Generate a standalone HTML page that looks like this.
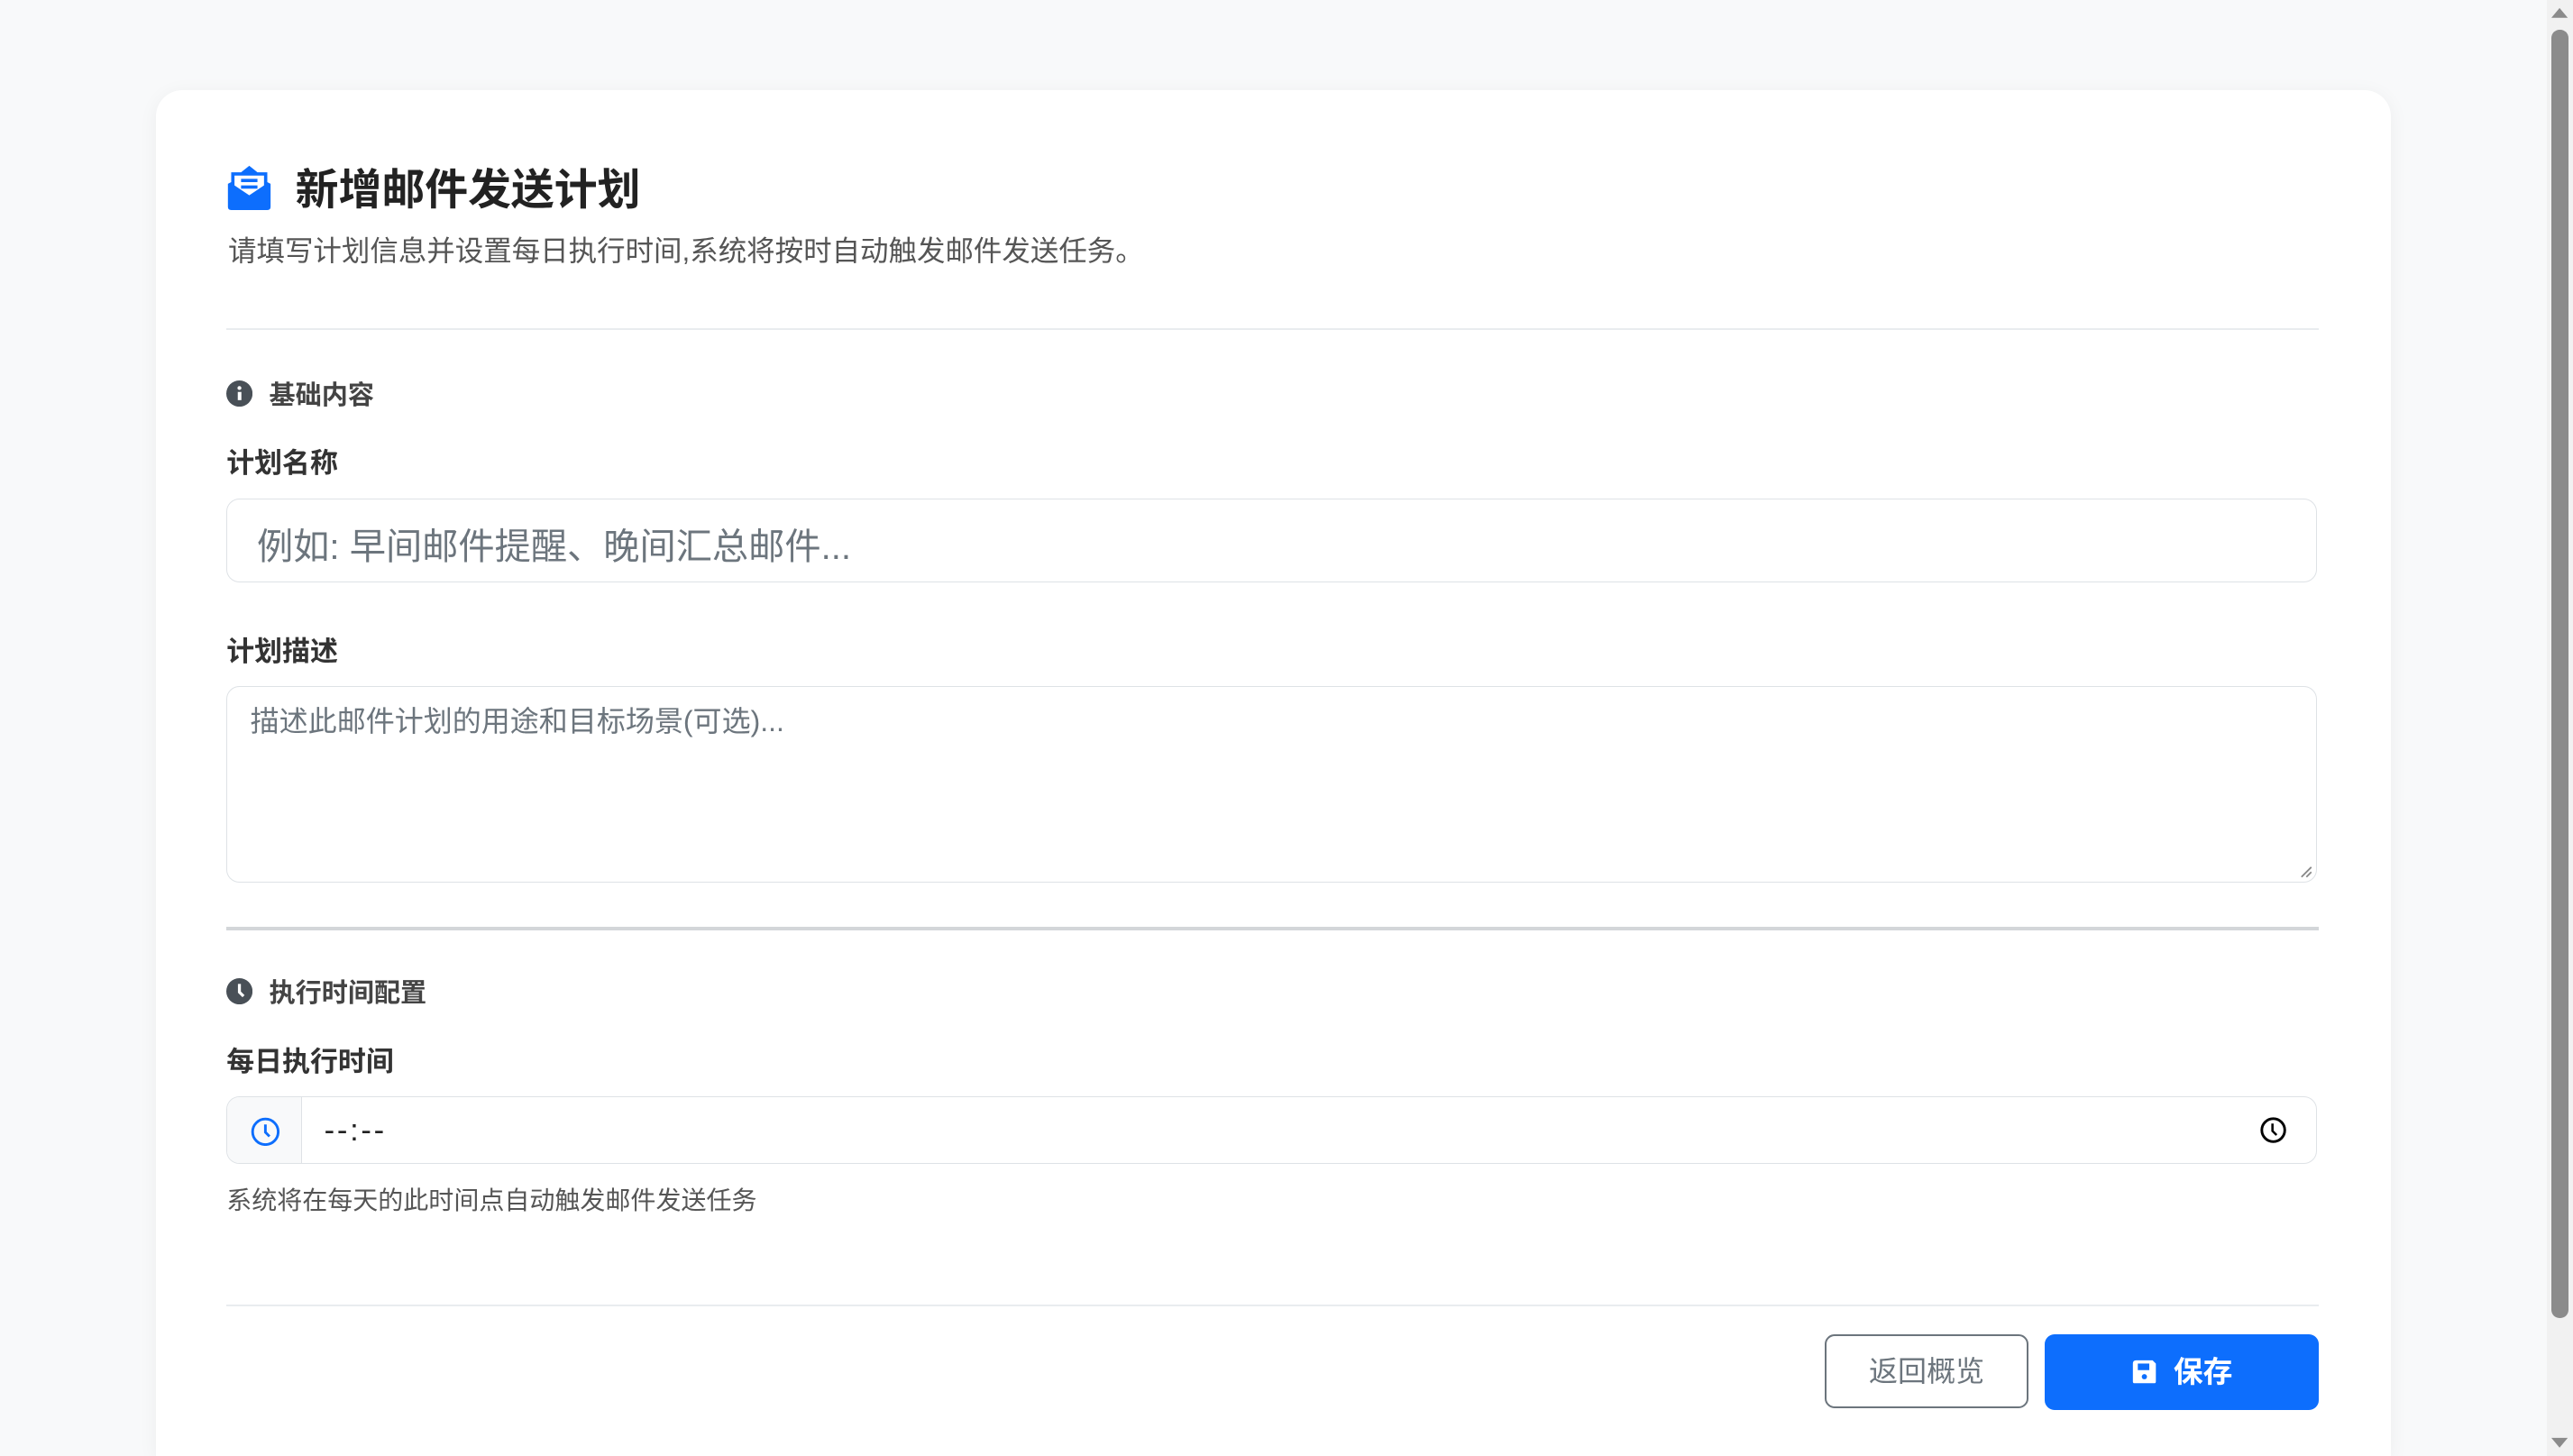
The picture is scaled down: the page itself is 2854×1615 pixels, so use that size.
<!DOCTYPE html>
<html><head><meta charset="utf-8"><style>
html{zoom:1.8202;overflow:hidden}
body{margin:0;width:1568px;height:887px;overflow:hidden;background:#f8f9fa;font-family:"Liberation Sans","Noto Sans CJK SC",sans-serif;position:relative}
.card{position:absolute;left:95px;top:55px;width:1362px;height:832px;background:#fff;border-radius:16px 16px 0 0;box-shadow:0 2px 12px rgba(0,0,0,.05)}
.a{position:absolute;white-space:nowrap}
.hr{position:absolute;left:138px;width:1275px;height:1px;background:#e9ecef}
.lbl{font-size:17px;font-weight:bold;color:#333}
.sec{font-size:16px;font-weight:bold;color:#444}
.box{position:absolute;left:138px;width:1273px;border:1px solid #dee2e6;border-radius:8px;background:#fff}
</style></head><body>
<div class="card"></div>
<svg class="a" style="left:138px;top:100px" width="28" height="28" viewBox="0 0 28 28"><path d="M14 1 L19 5 L25 5 L25 11 L27 12 L27 26 Q27 28 25 28 L3 28 Q1 28 1 26 L1 12 L3 11 L3 5 L9 5Z" fill="#0d6efd"/><path d="M5 7 H23 V13 L14 19 L5 13Z" fill="#fff"/><rect x="9" y="9" width="10" height="2" fill="#0d6efd"/><rect x="9" y="13" width="10" height="2" fill="#0d6efd"/></svg>
<div class="a" style="left:180px;top:94px;font-size:26.3px;font-weight:bold;color:#222">新增邮件发送计划</div>
<div class="a" style="left:139px;top:139px;font-size:17.3px;color:#555">请填写计划信息并设置每日执行时间,系统将按时自动触发邮件发送任务。</div>
<div class="hr" style="top:200px"></div>
<svg class="a" style="left:138px;top:232px" width="16" height="16"><circle cx="8" cy="8" r="8" fill="#495057"/><rect x="7" y="7" width="2.2" height="5" fill="#fff"/><circle cx="8" cy="4.6" r="1.2" fill="#fff"/></svg>
<div class="a sec" style="left:164px;top:228px">基础内容</div>
<div class="a lbl" style="left:138px;top:268px">计划名称</div>
<div class="box" style="top:304px;height:50px"><div class="a" style="left:18px;top:10px;font-size:22.1px;color:#6c757d">例如: 早间邮件提醒、晚间汇总邮件...</div></div>
<div class="a lbl" style="left:138px;top:383px">计划描述</div>
<div class="box" style="top:418px;height:119px"><div class="a" style="left:14px;top:7px;font-size:17.6px;color:#6c757d">描述此邮件计划的用途和目标场景(可选)...</div>
<svg class="a" style="right:2px;bottom:2px" width="8" height="8"><path d="M7 1L1 7M7 4L4 7" stroke="#888"/></svg></div>
<div class="hr" style="top:565px;height:2px;background:#d3d6d9"></div>
<svg class="a" style="left:138px;top:596px" width="16" height="16"><circle cx="8" cy="8" r="8" fill="#495057"/><path d="M8 3.5V8.5L10.5 11" stroke="#fff" stroke-width="1.8" fill="none"/></svg>
<div class="a sec" style="left:164px;top:592px">执行时间配置</div>
<div class="a lbl" style="left:138px;top:633px">每日执行时间</div>
<div class="box" style="top:668px;height:40px;overflow:hidden"><div class="a" style="left:0;top:0;width:45px;height:40px;background:#f8f9fa;border-right:1px solid #dee2e6"></div>
<svg class="a" style="left:14px;top:12px" width="18" height="18"><circle cx="9" cy="9" r="7.8" stroke="#0d6efd" stroke-width="1.6" fill="none"/><path d="M9 4.5V9.3L11.5 11.8" stroke="#0d6efd" stroke-width="1.6" fill="none"/></svg>
<div class="a" style="left:59px;top:10px;font-size:19px;letter-spacing:1.5px;color:#222">--:--</div>
<svg class="a" style="left:1239px;top:12px" width="16" height="16"><circle cx="8" cy="8" r="7" stroke="#000" stroke-width="1.6" fill="none"/><path d="M7.5 4V8.5L10 11" stroke="#000" stroke-width="1.4" fill="none"/></svg></div>
<div class="a" style="left:138px;top:719px;font-size:15.4px;color:#555">系统将在每天的此时间点自动触发邮件发送任务</div>
<div class="hr" style="top:795px"></div>
<div class="a" style="left:1112px;top:813px;width:122px;height:43px;border:1.5px solid #6c757d;border-radius:6px;font-size:17.6px;color:#6c757d;text-align:center;line-height:43px">返回概览</div>
<div class="a" style="left:1246px;top:813px;width:167px;height:46px;background:#0d6efd;border-radius:6px;color:#fff;font-size:18px;font-weight:bold;text-align:center;line-height:46px"><svg style="vertical-align:-2px;margin-right:10px" width="16" height="16"><path d="M1 3Q1 1 3 1H13L15 3V14Q15 15 14 15H2Q1 15 1 14Z" fill="#fff"/><rect x="4" y="3" width="7" height="4" fill="#0d6efd"/><circle cx="8" cy="11" r="1.6" fill="#0d6efd"/></svg>保存</div>
<div class="a" style="left:1552px;top:0;width:16px;height:887px;background:#f1f1f1"></div>
<div class="a" style="left:1555px;top:18px;width:10px;height:785px;background:#8b8b8b;border-radius:5px"></div>
<svg class="a" style="left:1555px;top:4px" width="10" height="8"><path d="M0 7L5 1L10 7Z" fill="#8b8b8b"/></svg>
<svg class="a" style="left:1555px;top:875px" width="10" height="8"><path d="M0 1L5 7L10 1Z" fill="#8b8b8b"/></svg>
</body></html>
